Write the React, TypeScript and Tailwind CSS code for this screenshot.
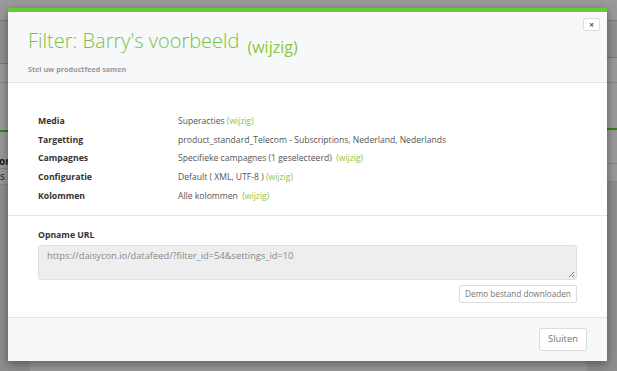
import React from "react";

const font = { fontFamily: '"Open Sans", "Liberation Sans", sans-serif' };

function Row({ label, children }: { label: string; children: React.ReactNode }) {
  return (
    <div className="flex h-[18.75px] items-center">
      <div className="w-[140px] text-[8.7px] font-bold text-[#333]">{label}</div>
      <div className="text-[8.6px] text-[#555]">{children}</div>
    </div>
  );
}

const W = () => <span className="text-[#8cc63f]">(wijzig)</span>;

export default function App() {
  return (
    <div className="relative h-[371px] w-[617px] overflow-hidden bg-white" style={font}>
      {/* background page */}
      <div className="flex h-full">
        <div className="flex w-[30px] flex-col">
          <div className="h-[20px] bg-white" />
          <div className="h-[44px] border-y border-[#ccc] bg-[#eee]" />
          <div className="h-[18px] bg-white" />
          <div className="h-[48px] border-t border-[#ddd] bg-white" />
          <div className="h-[24px] border-t-2 border-[#66cc33] bg-white" />
          <div className="flex h-[15px] items-center border-b border-[#ddd] bg-white text-[10px] font-bold text-[#334]">
            <span className="-ml-[1px]">om</span>
          </div>
          <div className="flex h-[16px] items-center border-b border-[#ddd] bg-white text-[10px] text-[#333]">
            <span>s</span>
          </div>
          <div className="flex-1 bg-[#ececec]" />
        </div>
        <div className="flex-1" />
        <div className="flex w-[30px] flex-col">
          <div className="h-[20px] bg-white" />
          <div className="h-[38px] border-y border-[#ccc] bg-[#eee]" />
          <div className="h-[24px] bg-white" />
          <div className="h-[46px] border-t border-[#ddd] bg-white" />
          <div className="h-[18px] border-t-2 border-[#66cc33] bg-white" />
          <div className="flex h-[18px] items-center border-b border-[#ddd] bg-white pl-[7px] text-[10px] font-bold text-[#333]">
            Co
          </div>
          <div className="flex h-[18px] items-center border-b border-[#ddd] bg-white pl-[7px] text-[10px] text-[#333]">
            De
          </div>
          <div className="flex-1 bg-[#ececec]" />
        </div>
      </div>
      <div className="absolute inset-0 bg-black/40" />

      {/* modal */}
      <div className="absolute left-[8px] top-[8px] w-[599px] bg-white shadow-[0_3px_9px_rgba(0,0,0,0.4)]">
        <div className="h-[4px] bg-[#66cc33]" />
        <div className="relative h-[71px] border-b border-[#e5e5e5] bg-[#f7f8fa] pl-[20px] pt-[16px]">
          <div className="flex items-start">
            <span className="text-[20px] font-light leading-[26px] text-[#7cc242]">Filter: Barry's voorbeeld</span>
            <span className="ml-[8px] mt-[8px] text-[16px] leading-[22px] text-[#8cc63f]">(wijzig)</span>
          </div>
          <div className="mt-[6px] text-[7.2px] font-bold text-[#999]">Stel uw productfeed samen</div>
          <button className="absolute right-[7px] top-[6px] flex h-[13px] w-[17px] items-center justify-center rounded-[2px] border border-[#ddd] bg-white text-[9px] font-bold leading-none text-[#555]">
            ×
          </button>
        </div>
        <div className="border-b border-[#e5e5e5] px-[30px] pb-[9px] pt-[29px]">
          <Row label="Media">
            Superacties <W />
          </Row>
          <Row label="Targetting">product_standard_Telecom - Subscriptions, Nederland, Nederlands</Row>
          <Row label="Campagnes">
            Specifieke campagnes (1 geselecteerd)&nbsp; <W />
          </Row>
          <Row label="Configuratie">
            Default ( XML, UTF-8 ) <W />
          </Row>
          <Row label="Kolommen">
            Alle kolommen&nbsp; <W />
          </Row>
        </div>
        <div className="border-b border-[#e5e5e5] px-[30px] pb-[14px] pt-[13px]">
          <div className="h-[12px] text-[8.7px] font-bold leading-[12px] text-[#333]">Opname URL</div>
          <div className="relative mt-[4px] h-[35px] rounded-[3px] border border-[#e0e0e0] bg-[#eeeeee] px-[8px] pt-[3px] text-[9.3px] text-[#888]">
            https://daisycon.io/datafeed/?filter_id=54&amp;settings_id=10
            <svg className="absolute bottom-[1px] right-[1px]" width="8" height="8" viewBox="0 0 8 8">
              <path d="M7 2 L2 7 M7 5 L5 7" stroke="#666" strokeWidth="0.8" />
            </svg>
          </div>
          <div className="mt-[5px] flex justify-end">
            <button className="h-[18px] w-[118px] rounded-[2px] border border-[#ddd] bg-white text-[8.2px] text-[#777]">
              Demo bestand downloaden
            </button>
          </div>
        </div>
        <div className="flex h-[43px] items-center justify-end bg-[#f7f8fa] pr-[20px]">
          <button className="h-[23px] w-[48px] rounded-[2px] border border-[#ddd] bg-white text-[9.4px] text-[#777]">
            Sluiten
          </button>
        </div>
      </div>
    </div>
  );
}
